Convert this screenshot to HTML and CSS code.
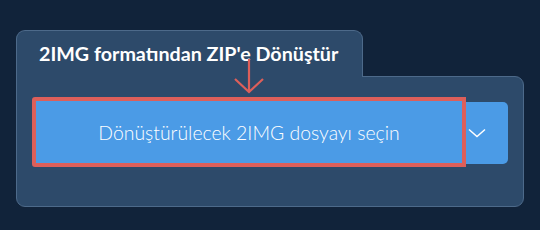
FILE: index.html
```html
<!DOCTYPE html>
<html lang="tr">
<head>
<meta charset="utf-8">
<link rel="stylesheet" href="styles.css">
</head>
<body>
<div class="widget">
  <div class="tab">2IMG formatından ZIP'e Dönüştür</div>
  <div class="panel">
    <div class="group">
      <button class="main">Dönüştürülecek 2IMG dosyayı seçin
        <svg class="arrow" width="32" height="36" viewBox="0 0 32 36"><path d="M16 0 V33 M2 20 L16 33 L30 20" fill="none" stroke="#dd5f5a" stroke-width="2.2"/></svg>
      </button>
      <button class="drop"><svg width="18" height="10" viewBox="0 0 18 10"><path d="M1 1.5 L9 8.5 L17 1.5" fill="none" stroke="#fff" stroke-width="1.5"/></svg></button>
    </div>
  </div>
</div>
</body>
</html>
```
FILE: styles.css
```css
html, body {
  margin: 0;
  padding: 0;
  background: #11233a;
  width: 540px;
  height: 230px;
  overflow: hidden;
  font-family: Lato, "Noto Sans", sans-serif;
}
.widget {
  padding: 30px 0 0 16px;
  width: 507px;
}
.tab {
  display: inline-block;
  box-sizing: border-box;
  width: 347px;
  height: 47px;
  background: #2d4a6a;
  border: 1px solid #4d6a8a;
  border-bottom: none;
  border-radius: 9px 9px 0 0;
  color: #fff;
  font-weight: 700;
  font-size: 19.7px;
  line-height: 24px;
  padding: 11px 0 0 22px;
  position: relative;
  z-index: 1;
  vertical-align: top;
}
.panel {
  box-sizing: border-box;
  width: 508px;
  height: 131px;
  margin-top: -1px;
  background: #2d4a6a;
  border: 1px solid #4d6a8a;
  border-radius: 0 9px 9px 9px;
  padding: 20px 14px 0 15px;
}
.group {
  display: flex;
  align-items: flex-start;
}
.main {
  position: relative;
  box-sizing: border-box;
  width: 434px;
  height: 70px;
  background: #4b9be6;
  border: 4px solid #dd5f5a;
  border-radius: 3px 0 0 3px;
  color: #fff;
  font-family: Lato, "Noto Sans", sans-serif;
  font-size: 19.4px;
  font-weight: 300;
  padding: 0;
  margin: 0;
}
.arrow {
  position: absolute;
  left: 197px;
  top: -42px;
  z-index: 2;
}
.drop {
  box-sizing: border-box;
  width: 42px;
  height: 62px;
  margin: 5px 0 0 0;
  padding: 0;
  border: none;
  background: #4b9be6;
  border-radius: 0 5px 5px 0;
  display: flex;
  align-items: center;
  justify-content: center;
}
.drop svg {
  margin-left: -20px;
}
```
